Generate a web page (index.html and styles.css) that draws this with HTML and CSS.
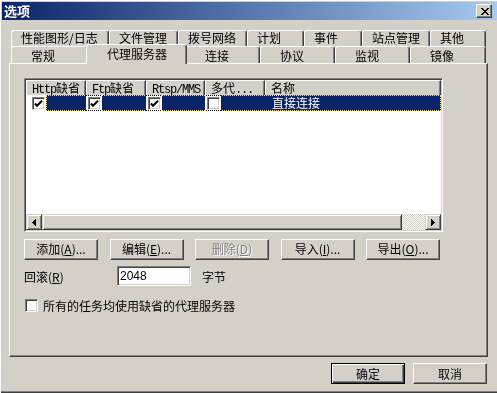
FILE: index.html
```html
<!DOCTYPE html>
<html lang="zh-CN">
<head>
<meta charset="utf-8">
<title>选项</title>
<link rel="stylesheet" href="styles.css">
</head>
<body>
<div class="window">
  <div class="titlebar">
    <span class="title">选项</span>
    <span class="close">
      <svg width="8" height="7" viewBox="0 0 8 7" shape-rendering="crispEdges"><path d="M0 0h2v1H0zM6 0h2v1H6zM1 1h2v1H1zM5 1h2v1H5zM2 2h4v1H2zM3 3h2v1H3zM2 4h4v1H2zM1 5h2v1H1zM5 5h2v1H5zM0 6h2v1H0zM6 6h2v1H6z" fill="#000"/></svg>
    </span>
  </div>

  <div class="tabs">
    <div class="tabrow row1">
      <div class="tab">性能图形/日志</div>
      <div class="tab">文件管理</div>
      <div class="tab">拨号网络</div>
      <div class="tab">计划</div>
      <div class="tab">事件</div>
      <div class="tab">站点管理</div>
      <div class="tab">其他</div>
    </div>
    <div class="tabrow row2">
      <div class="tab">常规</div>
      <div class="tab selected">代理服务器</div>
      <div class="tab">连接</div>
      <div class="tab">协议</div>
      <div class="tab">监视</div>
      <div class="tab">镜像</div>
    </div>
  </div>

  <div class="panel">
    <div class="listview">
      <div class="lv-header">
        <div class="hcell"><span class="lat">Http</span>缺省</div>
        <div class="hcell"><span class="lat">Ftp</span>缺省</div>
        <div class="hcell"><span class="lat">Rtsp/MMS</span></div>
        <div class="hcell clip">多代<span class="lat">...</span></div>
        <div class="hcell">名称</div>
      </div>
      <div class="lv-body">
        <div class="lv-row">
          <div class="cell first"><span class="cb"><svg class="tick" width="9" height="8" viewBox="0 0 9 8"><path d="M1 3.5l2 2.2L8 0.8" fill="none" stroke="#000" stroke-width="2"/></svg></span><span class="hl"></span></div>
          <div class="cell"><span class="cb"><svg class="tick" width="9" height="8" viewBox="0 0 9 8"><path d="M1 3.5l2 2.2L8 0.8" fill="none" stroke="#000" stroke-width="2"/></svg></span><span class="hl"></span></div>
          <div class="cell"><span class="cb"><svg class="tick" width="9" height="8" viewBox="0 0 9 8"><path d="M1 3.5l2 2.2L8 0.8" fill="none" stroke="#000" stroke-width="2"/></svg></span><span class="hl"></span></div>
          <div class="cell"><span class="cb"></span><span class="hl"></span></div>
          <div class="cell name">直接连接</div>
          <span class="focus"></span>
        </div>
      </div>
      <div class="hscroll">
        <span class="sb-btn"><svg width="4" height="7" viewBox="0 0 4 7" shape-rendering="crispEdges"><path d="M3 0h1v7H3zM2 1h1v5H2zM1 2h1v3H1zM0 3h1v1H0z" fill="#000"/></svg></span>
        <span class="sb-thumb"></span>
        <span class="sb-track"></span>
        <span class="sb-btn"><svg width="4" height="7" viewBox="0 0 4 7" shape-rendering="crispEdges"><path d="M0 0h1v7H0zM1 1h1v5H1zM2 2h1v3H2zM3 3h1v1H3z" fill="#000"/></svg></span>
      </div>
    </div>

    <div class="btnrow">
      <span class="btn">添加(<u>A</u>)...</span>
      <span class="btn">编辑(<u>E</u>)...</span>
      <span class="btn disabled">删除(<u>D</u>)</span>
      <span class="btn">导入(<u>I</u>)...</span>
      <span class="btn">导出(<u>O</u>)...</span>
    </div>

    <div class="field">
      <span class="field-label">回滚(<u>R</u>)</span>
      <span class="input">2048</span>
      <span class="unit">字节</span>
    </div>

    <div class="check">
      <span class="cb"></span>
      <span class="check-label">所有的任务均使用缺省的代理服务器</span>
    </div>
  </div>

  <div class="footer">
    <span class="btn default">确定</span>
    <span class="btn">取消</span>
  </div>
</div>
</body>
</html>
```

FILE: styles.css
```css
* { box-sizing: border-box; margin: 0; padding: 0; }
html, body { width: 497px; height: 393px; overflow: hidden; }
body {
  background: #D4D0C8;
  font-family: "Noto Sans CJK SC", sans-serif;
  font-size: 12px;
  color: #000;
}
u { text-decoration: underline; text-underline-offset: 1px; }

.window {
  width: 497px;
  height: 393px;
  padding: 2px 0 0 2px;
  background: #D4D0C8;
  box-shadow: inset 1px 1px #fff, inset 0 -1px #404040, inset 0 -2px #808080;
  display: flex;
  flex-direction: column;
}

/* title bar */
.titlebar {
  height: 18px;
  display: flex;
  align-items: center;
  padding-left: 2px;
  background: linear-gradient(to right, #0A246A, #A6CAF0);
}
.title {
  color: #fff;
  font-weight: 700;
  font-size: 13px;
  line-height: 18px;
}
.close {
  margin-left: auto;
  margin-right: 5px;
  width: 16px;
  height: 14px;
  display: flex;
  align-items: center;
  justify-content: center;
  padding-left: 1px;
  background: #D4D0C8;
  border: 1px solid;
  border-color: #fff #404040 #404040 #fff;
  box-shadow: inset -1px -1px #808080;
}

/* tabs */
.tabs { margin: 10px 0 0 9px; }
.tabrow { display: grid; height: 17px; }
.row1 { grid-template-columns: 98px 69px 69px 57px 58px 68px 56px; }
.row2 { grid-template-columns: 77px 97px 75px 75px 75px 76px; margin-top: -1px; }
.tab {
  background: #D4D0C8;
  border-top: 1px solid #fff;
  border-left: 1px solid #fff;
  border-right: 1px solid #404040;
  box-shadow: inset -1px 0 #808080;
  border-radius: 3px 3px 0 0;
  line-height: 14px;
  white-space: nowrap;
  overflow: hidden;
}
.row1 .tab { padding: 0 0 0 9px; }
.row2 .tab { padding: 2px 0 0 19px; }
.row2 .tab.selected {
  position: relative;
  z-index: 1;
  margin: -2px -2px -1px -2px;
  padding-top: 2px;
  padding-left: 20px;
}

/* panel */
.panel {
  margin-left: 7px;
  width: 479px;
  height: 294px;
  border: 1px solid;
  border-color: #fff #404040 #404040 #fff;
  box-shadow: inset -1px -1px #808080;
  padding: 14px 0 0 14px;
  display: flex;
  flex-direction: column;
  align-items: flex-start;
}

/* list view */
.listview {
  width: 419px;
  height: 154px;
  border: 1px solid;
  border-color: #808080 #fff #fff #808080;
  box-shadow: inset 1px 1px #404040, inset -1px -1px #D4D0C8;
  padding: 1px;
  display: flex;
  flex-direction: column;
  background: #fff;
}
.lv-header, .lv-row {
  display: grid;
  grid-template-columns: 60px 60px 59px 60px 1fr;
}
.lv-header { height: 15px; background: #D4D0C8; }
.hcell {
  border: 1px solid;
  border-color: #fff #404040 #404040 #fff;
  box-shadow: inset -1px -1px #808080;
  line-height: 13px;
  padding-left: 5px;
  white-space: nowrap;
}
.hcell.clip { overflow: hidden; }
.lat {
  font-family: "Liberation Mono", monospace;
  letter-spacing: -1.2px;
}
.lv-body { flex: 1; background: #fff; }
.lv-row { position: relative; height: 16px; }
.cell { display: flex; align-items: center; padding-left: 2px; }
.cell.first { padding-left: 6px; }
.hl { align-self: stretch; flex: 1; margin-left: 1px; background: #0A246A; }
.cell.name {
  background: #0A246A;
  color: #fff;
  padding-left: 7px;
  line-height: 16px;
}
.focus {
  position: absolute;
  left: 20px; right: 0; top: 0; bottom: 0;
  border: 1px dotted #fff;
  mix-blend-mode: difference;
  pointer-events: none;
}

.cb {
  width: 13px;
  height: 13px;
  flex: none;
  background: #fff;
  border: 1px solid;
  border-color: #808080 #fff #fff #808080;
  box-shadow: inset 1px 1px #404040, inset -1px -1px #D4D0C8;
  display: flex;
  align-items: center;
  justify-content: center;
}
.tick { flex: none; margin-top: 1px; }

/* scrollbar */
.hscroll { height: 16px; display: flex; }
.sb-btn, .sb-thumb {
  height: 16px;
  background: #D4D0C8;
  border: 1px solid;
  border-color: #D4D0C8 #404040 #404040 #D4D0C8;
  box-shadow: inset 1px 1px #fff, inset -1px -1px #808080;
}
.sb-btn { width: 16px; display: flex; align-items: center; justify-content: center; }
.sb-thumb { width: 360px; }
.sb-track {
  flex: 1;
  background: repeating-conic-gradient(#fff 0 25%, #D4D0C8 0 50%) 0 0 / 2px 2px;
}

/* buttons */
.btnrow { display: flex; gap: 11.5px; margin-top: 7px; }
.btn {
  width: 74px;
  height: 21px;
  background: #D4D0C8;
  border: 1px solid;
  border-color: #fff #404040 #404040 #fff;
  box-shadow: inset -1px -1px #808080;
  text-align: center;
  line-height: 17px;
  white-space: nowrap;
}
.btn.disabled { color: #808080; text-shadow: 1px 1px #fff; }

.field { display: flex; align-items: center; margin-top: 6px; }
.field-label { width: 93px; }
.input {
  width: 74px;
  height: 20px;
  background: #fff;
  border: 1px solid;
  border-color: #808080 #fff #fff #808080;
  box-shadow: inset 1px 1px #404040, inset -1px -1px #D4D0C8;
  padding-left: 2px;
  line-height: 18px;
  font-family: "Liberation Sans", sans-serif;
}
.unit { margin-left: 11px; }

.check { display: flex; align-items: center; margin-top: 11px; margin-left: 1px; }
.check-label { margin-left: 5px; }

/* footer */
.footer {
  display: flex;
  justify-content: flex-end;
  gap: 8px;
  margin-top: 6px;
  padding-right: 10px;
}
.footer .btn { line-height: 19px; }
.btn.default {
  border: 1px solid #000;
  box-shadow: inset 1px 1px #fff, inset -1px -1px #404040, inset -2px -2px #808080;
}
```
